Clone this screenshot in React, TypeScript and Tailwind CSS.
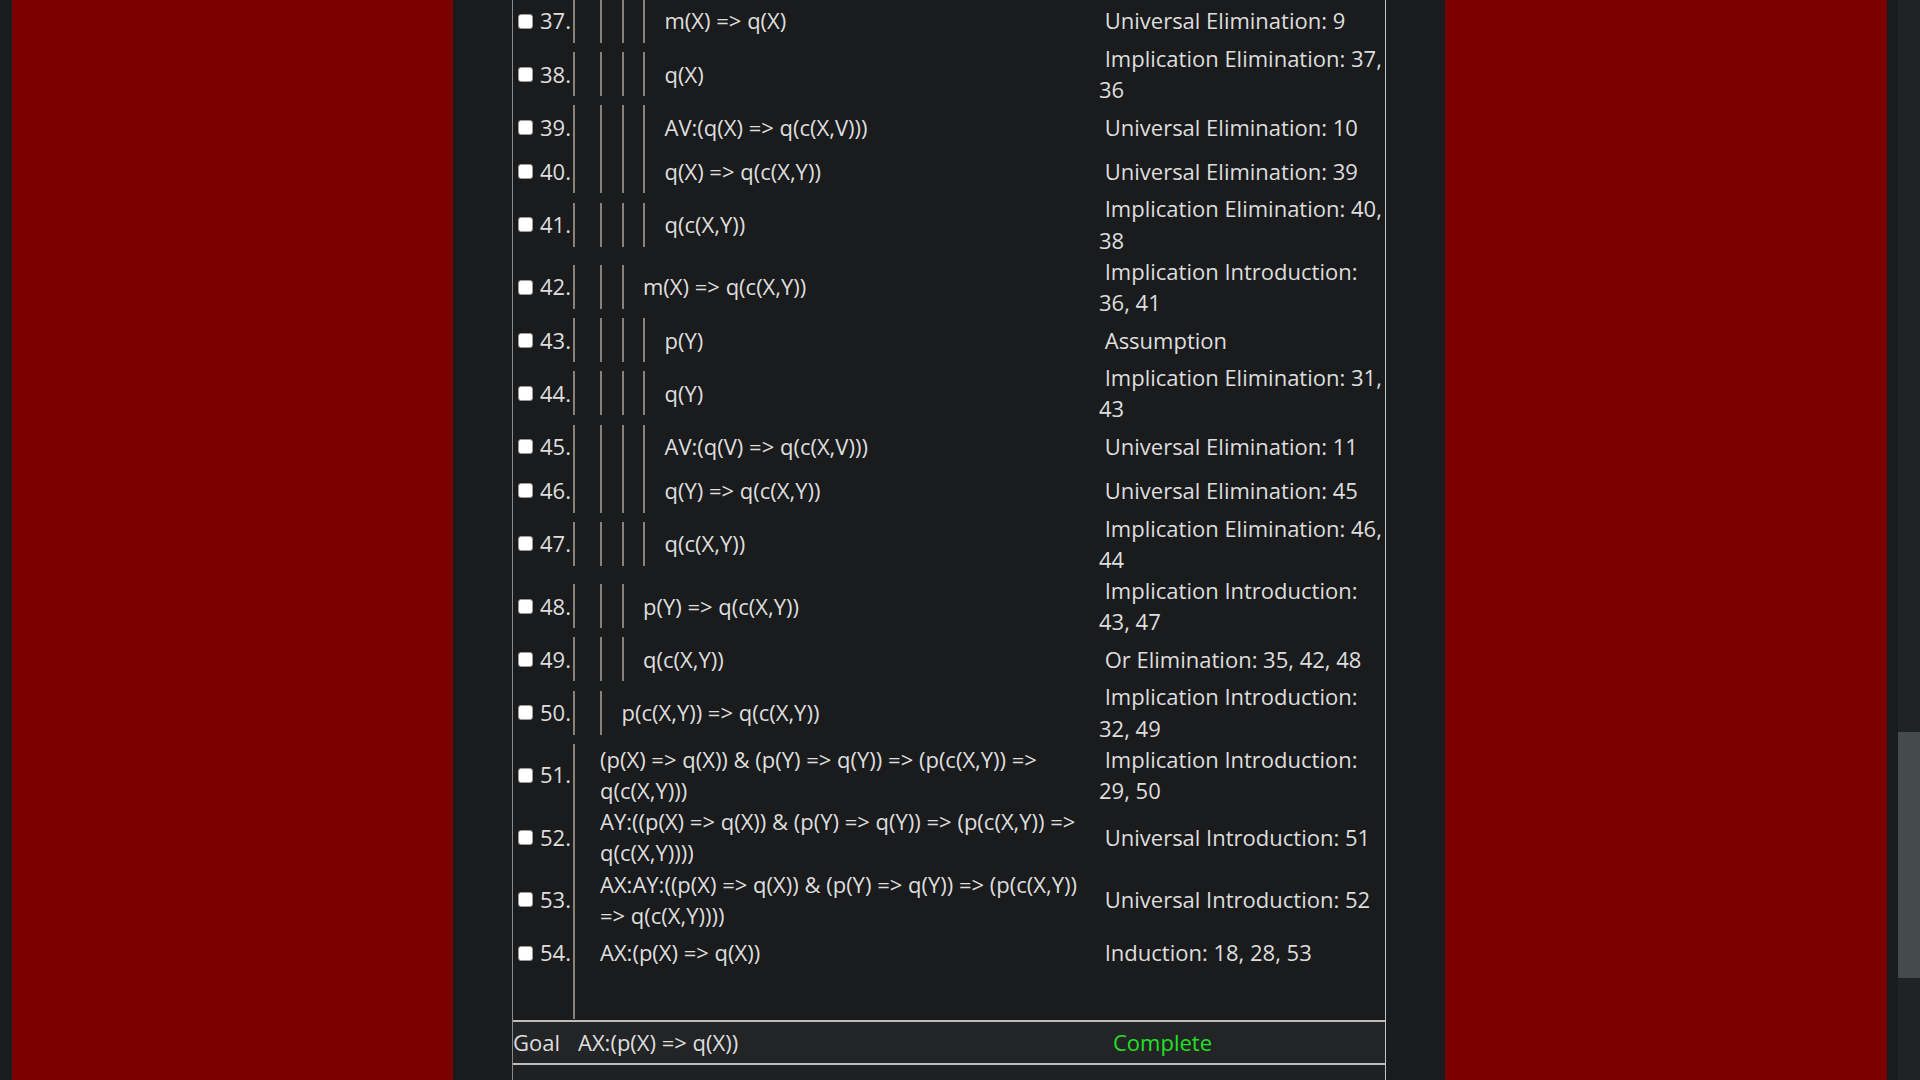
import React from 'react';

type Line = {
  n: number;
  depth: number;
  formula: string;
  reason: string;
};

const lines: Line[] = [
  { n: 37, depth: 3, formula: 'm(X) => q(X)', reason: 'Universal Elimination: 9' },
  { n: 38, depth: 3, formula: 'q(X)', reason: 'Implication Elimination: 37, 36' },
  { n: 39, depth: 3, formula: 'AV:(q(X) => q(c(X,V)))', reason: 'Universal Elimination: 10' },
  { n: 40, depth: 3, formula: 'q(X) => q(c(X,Y))', reason: 'Universal Elimination: 39' },
  { n: 41, depth: 3, formula: 'q(c(X,Y))', reason: 'Implication Elimination: 40, 38' },
  { n: 42, depth: 2, formula: 'm(X) => q(c(X,Y))', reason: 'Implication Introduction: 36, 41' },
  { n: 43, depth: 3, formula: 'p(Y)', reason: 'Assumption' },
  { n: 44, depth: 3, formula: 'q(Y)', reason: 'Implication Elimination: 31, 43' },
  { n: 45, depth: 3, formula: 'AV:(q(V) => q(c(X,V)))', reason: 'Universal Elimination: 11' },
  { n: 46, depth: 3, formula: 'q(Y) => q(c(X,Y))', reason: 'Universal Elimination: 45' },
  { n: 47, depth: 3, formula: 'q(c(X,Y))', reason: 'Implication Elimination: 46, 44' },
  { n: 48, depth: 2, formula: 'p(Y) => q(c(X,Y))', reason: 'Implication Introduction: 43, 47' },
  { n: 49, depth: 2, formula: 'q(c(X,Y))', reason: 'Or Elimination: 35, 42, 48' },
  { n: 50, depth: 1, formula: 'p(c(X,Y)) => q(c(X,Y))', reason: 'Implication Introduction: 32, 49' },
  { n: 51, depth: 0, formula: '(p(X) => q(X)) & (p(Y) => q(Y)) => (p(c(X,Y)) => q(c(X,Y)))', reason: 'Implication Introduction: 29, 50' },
  { n: 52, depth: 0, formula: 'AY:((p(X) => q(X)) & (p(Y) => q(Y)) => (p(c(X,Y)) => q(c(X,Y))))', reason: 'Universal Introduction: 51' },
  { n: 53, depth: 0, formula: 'AX:AY:((p(X) => q(X)) & (p(Y) => q(Y)) => (p(c(X,Y)) => q(c(X,Y))))', reason: 'Universal Introduction: 52' },
  { n: 54, depth: 0, formula: 'AX:(p(X) => q(X))', reason: 'Induction: 18, 28, 53' },
];

// nested subproof bars, one per level
const Bars: React.FC<{ depth: number; children: React.ReactNode }> = ({ depth, children }) => {
  if (depth <= 0) {
    return <div className="min-h-[44px] flex items-center pr-[12px]">{children}</div>;
  }
  return (
    <div className="border-l-2 border-[#8a8178] pl-[19.5px]">
      <Bars depth={depth - 1}>{children}</Bars>
    </div>
  );
};

const ProofRow: React.FC<{ line?: Line }> = ({ line }) => (
  <div className="grid grid-cols-[60px_526px_286px]">
    <div className="flex items-center pl-[5px] gap-[7px]">
      {line && (
        <>
          <span className="w-[15px] h-[15px] rounded-[3px] bg-white border border-[#9a9a9a] shrink-0" />
          <span>{line.n}.</span>
        </>
      )}
    </div>
    <div className="flex items-center">
      <div className="w-full border-l-2 border-[#8a8178] pl-[25px]">
        <Bars depth={line ? line.depth : 0}>
          <span>{line ? line.formula : ''}</span>
        </Bars>
      </div>
    </div>
    <div className="flex items-center">
      {line && <span>{'\u00a0' + line.reason}</span>}
    </div>
  </div>
);

export default function App() {
  return (
    <div
      className="flex h-screen w-full overflow-hidden bg-[#1a1b1d] text-[#dedede] text-[22px] leading-[31.2px]"
      style={{ fontFamily: '"Open Sans", "Noto Sans", sans-serif' }}
    >
      <div className="w-[12px] shrink-0" />
      <div className="w-[441px] shrink-0 bg-[#7a0000]" />

      <main className="w-[992px] shrink-0 bg-[#1a1b1d] px-[59px]">
        <div className="h-full border-l border-r border-l-[#8a8a8a] border-r-[#c4c4c4] flex flex-col">
          <div className="-mt-px">
            {lines.map(l => (
              <ProofRow key={l.n} line={l} />
            ))}
            <ProofRow />
            <div className="h-px" />
          </div>

          {/* Goal */}
          <div className="flex items-center h-[45px] border-t-2 border-b-2 border-[#bdbdbd] bg-[#222426]">
            <span className="w-[65px] shrink-0">Goal</span>
            <span className="w-[535px] shrink-0">AX:(p(X) =&gt; q(X))</span>
            <span className="text-[#24e024]">Complete</span>
          </div>
          <div className="flex-1 bg-[#1e2022]" />
        </div>
      </main>

      <div className="flex-1 bg-[#7a0000]" />
      <div className="w-[11px] shrink-0" />
      <div className="w-[22px] shrink-0 bg-[#202324] pt-[732px]">
        <div className="h-[246px] bg-[#454a4d]" />
      </div>
    </div>
  );
}
